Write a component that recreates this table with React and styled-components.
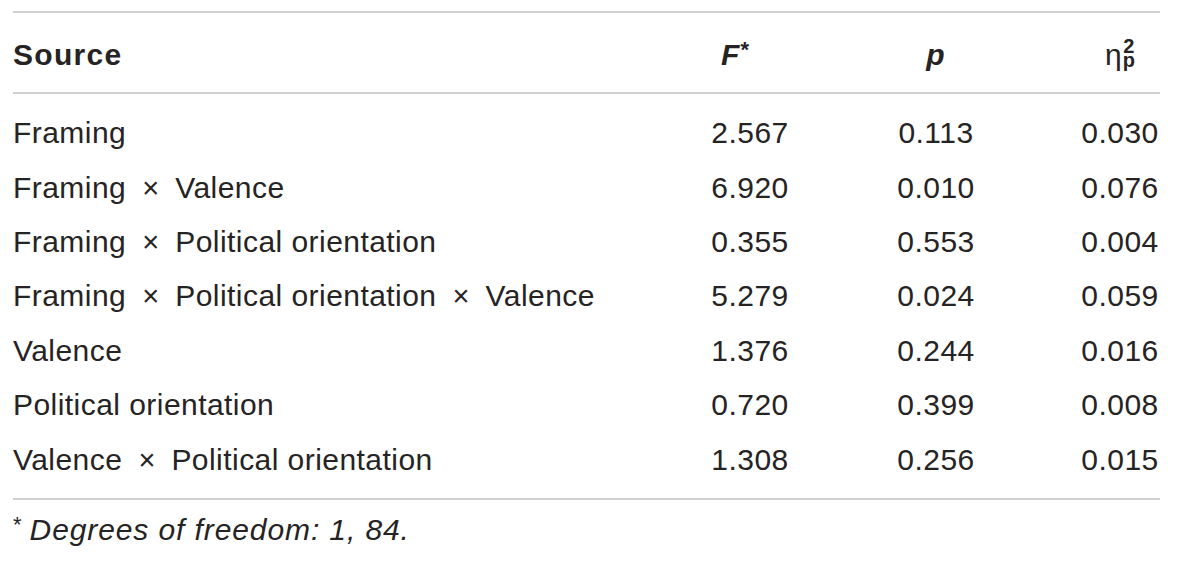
import React from 'react'
import styled, { createGlobalStyle } from 'styled-components'

const GlobalStyle = createGlobalStyle`
	body {
		margin: 0;
		background: #ffffff;
		font-family: "Liberation Sans", Arial, sans-serif;
		color: #262324;
	}
`

const Page = styled.div`
	width: 1147px;
	padding: 11px 0 0 13px;
`

const Table = styled.div`
	border-top: 2px solid #d0d0d0;
	border-bottom: 2px solid #d0d0d0;
`

const Row = styled.div`
	display: grid;
	grid-template-columns: 1fr 84px 80px 80px;
	column-gap: 104px;
	align-items: center;
	height: ${p => (p.$head ? '81px' : '54.4px')};
	padding-top: ${p => (p.$head ? '4px' : '0')};
	box-sizing: border-box;
	font-size: 30px;
	font-weight: ${p => (p.$head ? 700 : 400)};
	letter-spacing: ${p => (p.$head ? '1.3px' : '0.45px')};
	border-bottom: ${p => (p.$head ? '2px solid #d0d0d0' : 'none')};
`

const Body = styled.div`
	padding: 12px 0 11px;
`

const Cell = styled.div`
	text-align: ${p => (p.$left ? 'left' : 'center')};
	padding-right: ${p => p.$shift || 0}px;
	white-space: nowrap;
`

const Times = styled.span`
	padding: 0 8px;
	font-size: 29px;
	letter-spacing: 0;
`

const Italic = styled.span`
	font-style: italic;
`

const Star = styled.sup`
	font-size: 22px;
	font-style: normal;
	vertical-align: 8px;
	line-height: 0;
	letter-spacing: 0;
	margin-right: ${p => p.$gap || 0}px;
`

const Eta = styled.span`
	display: inline-flex;
	align-items: center;
	font-weight: 400;
	font-size: 30px;
	letter-spacing: 0;
`

const Scripts = styled.span`
	display: inline-flex;
	flex-direction: column;
	font-size: 20px;
	font-weight: 700;
	line-height: 14px;
	margin-left: 1px;
	margin-top: -4px;
`

const Footnote = styled.p`
	margin: 13px 0 0;
	font-size: 30px;
	letter-spacing: 0.9px;
`

const rows = [
	['Framing', '2.567', '0.113', '0.030'],
	['Framing × Valence', '6.920', '0.010', '0.076'],
	['Framing × Political orientation', '0.355', '0.553', '0.004'],
	['Framing × Political orientation × Valence', '5.279', '0.024', '0.059'],
	['Valence', '1.376', '0.244', '0.016'],
	['Political orientation', '0.720', '0.399', '0.008'],
	['Valence × Political orientation', '1.308', '0.256', '0.015'],
]

function Source({ text }) {
	const parts = text.split(' × ')
	return parts.map((part, i) => (
		<React.Fragment key={i}>
			{i > 0 && <Times> × </Times>}
			{part}
		</React.Fragment>
	))
}

function App() {
	return (
		<Page>
			<GlobalStyle />
			<Table>
				<Row $head>
					<Cell $left>Source</Cell>
					<Cell $shift={30}><Italic>F</Italic><Star>*</Star></Cell>
					<Cell><Italic>p</Italic></Cell>
					<Cell>
						<Eta>
							η
							<Scripts>
								<span>2</span>
								<span>p</span>
							</Scripts>
						</Eta>
					</Cell>
				</Row>
				<Body>
					{rows.map(r => (
						<Row key={r[0]}>
							<Cell $left><Source text={r[0]} /></Cell>
							<Cell>{r[1]}</Cell>
							<Cell>{r[2]}</Cell>
							<Cell>{r[3]}</Cell>
						</Row>
					))}
				</Body>
			</Table>
			<Footnote>
				<Star $gap={8}>*</Star><Italic>Degrees of freedom: 1, 84.</Italic>
			</Footnote>
		</Page>
	)
}

export default App
